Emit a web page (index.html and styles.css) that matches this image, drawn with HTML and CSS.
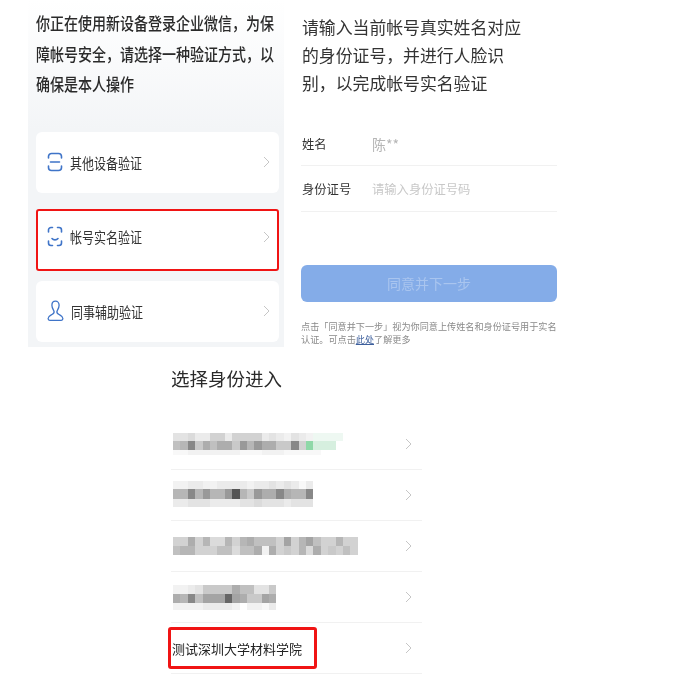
FILE: index.html
```html
<!DOCTYPE html>
<html lang="zh">
<head>
<meta charset="utf-8">
<title>企业微信验证</title>
<link rel="stylesheet" href="styles.css">
</head>
<body>
<div class="top">
  <section class="verify">
    <p class="verify-title"><span>你正在使用新设备登录企业微信，为保</span><span>障帐号安全，请选择一种验证方式，以</span><span>确保是本人操作</span></p>
    <div class="card first">
      <svg class="icon" width="16" height="20" viewBox="0 0 16 20"><path d="M1.500 6V4.500a3 3 0 0 1 3-3h7a3 3 0 0 1 3 3V6M1.500 14v1.500a3 3 0 0 0 3 3h7a3 3 0 0 0 3-3V14M3.500 10h9"/></svg>
      <span class="card-label">其他设备验证</span>
      <svg class="chev" width="7" height="12" viewBox="0 0 7 12"><path d="M1 1l5 5-5 5"/></svg>
    </div>
    <div class="card marked">
      <svg class="icon" width="16" height="21" viewBox="0 0 16 21"><path d="M1.500 6V4a2.500 2.500 0 0 1 2.500-2.500h1.500M10.500 1.500H12A2.500 2.500 0 0 1 14.500 4v2M1.500 15v2A2.500 2.500 0 0 0 4 19.500h1.500M10.500 19.500H12a2.500 2.500 0 0 0 2.500-2.500v-2M5 12.500c1.500 1.800 4.500 1.800 6 0"/></svg>
      <span class="card-label">帐号实名验证</span>
      <svg class="chev" width="7" height="12" viewBox="0 0 7 12"><path d="M1 1l5 5-5 5"/></svg>
    </div>
    <div class="card last">
      <svg class="icon thin" width="17" height="22" viewBox="0 0 17 22"><path d="M8.500 1.200c-2.200 0-3.600 1.800-3.600 4 0 2.600 1.300 4.200 2 5.700.6 1.300-.2 2.500-1.500 3.400-1.500 1-4.300 1.800-4.300 4.300 0 1 .6 1.700 1.600 1.700h11.600c1 0 1.600-.7 1.600-1.700 0-2.500-2.800-3.300-4.300-4.300-1.300-.9-2.100-2.100-1.500-3.400.7-1.500 2-3.100 2-5.700 0-2.200-1.400-4-3.600-4z"/></svg>
      <span class="card-label">同事辅助验证</span>
      <svg class="chev" width="7" height="12" viewBox="0 0 7 12"><path d="M1 1l5 5-5 5"/></svg>
    </div>
  </section>
  <section class="realname">
    <p class="rn-title">请输入当前帐号真实姓名对应<br>的身份证号，并进行人脸识<br>别，以完成帐号实名验证</p>
    <div class="field name-field"><span class="field-label">姓名</span><span class="field-value">陈**</span></div>
    <div class="field"><span class="field-label">身份证号</span><span class="field-hint">请输入身份证号码</span></div>
    <div class="next">同意并下一步</div>
    <p class="note">点击「同意并下一步」视为你同意上传姓名和身份证号用于实名<br>认证。可点击<a class="note-link">此处</a>了解更多</p>
  </section>
</div>
<section class="identity">
  <h1 class="id-title">选择身份进入</h1>
  <div class="id-row"><div class="mosaic" data-m="m1"></div><svg class="chev" width="7" height="12" viewBox="0 0 7 12"><path d="M1 1l5 5-5 5"/></svg></div>
  <div class="id-row"><div class="mosaic" data-m="m2"></div><svg class="chev" width="7" height="12" viewBox="0 0 7 12"><path d="M1 1l5 5-5 5"/></svg></div>
  <div class="id-row"><div class="mosaic" data-m="m3"></div><svg class="chev" width="7" height="12" viewBox="0 0 7 12"><path d="M1 1l5 5-5 5"/></svg></div>
  <div class="id-row"><div class="mosaic" data-m="m4"></div><svg class="chev" width="7" height="12" viewBox="0 0 7 12"><path d="M1 1l5 5-5 5"/></svg></div>
  <div class="id-row picked"><span class="id-name">测试深圳大学材料学院</span><svg class="chev" width="7" height="12" viewBox="0 0 7 12"><path d="M1 1l5 5-5 5"/></svg><span class="red-box"></span></div>
</section>
<script src="mosaic.js"></script>
</body>
</html>
```
FILE: styles.css
```css
* { box-sizing: border-box; }
html, body { margin: 0; padding: 0; background: #fff; }
body {
  width: 677px;
  height: 675px;
  overflow: hidden;
  font-family: "Noto Sans CJK SC", "Noto Sans", sans-serif;
  color: #222;
}
.top { display: flex; height: 347px; margin-left: 28px; filter: blur(0.35px); }
.verify {
  width: 256px;
  height: 347px;
  padding: 8px 5px 0 8px;
  background: linear-gradient(#fff 0, #f3f5f7 130px, #f3f5f7 100%);
  overflow: hidden;
}
.verify-title { margin: 0 0 32px; height: 92px; font-size: 14px; font-weight: 500; color: #2a2a2a; }
.verify-title span { display: block; height: 30.500px; line-height: 30.500px; white-space: nowrap; transform: scaleY(1.25); transform-origin: left center; }
.card { display: flex; align-items: center; height: 61px; background: #fff; border-radius: 6px; padding: 0 9px 1px 11px; }
.card.first { margin-bottom: 16px; }
.card.marked { height: 62px; margin-bottom: 10px; border: 2px solid #f01414; border-radius: 3px; padding: 0 7px 7px 9px; }
.icon { flex: none; fill: none; stroke: #3f74c8; stroke-width: 1.600; stroke-linecap: round; stroke-linejoin: round; }
.icon.thin { stroke-width: 1.300; }
.card .icon { margin-right: 7px; }
.card-label { flex: 1; font-size: 12px; color: #333; display: block; transform: scaleY(1.25); transform-origin: left center; white-space: nowrap; }
.chev { flex: none; fill: none; stroke: #c6c6c6; stroke-width: 1; }
.realname { width: 256px; margin-left: 17px; padding-top: 13px; }
.rn-title { margin: 0 0 26px; font-size: 16.850px; line-height: 28px; color: #333; height: 84px; padding-left: 1px; white-space: nowrap; }
.field { display: flex; align-items: center; height: 46px; border-bottom: 1px solid #f1f1f1; font-size: 12.300px; }
.name-field { height: 43px; }
.field-label { width: 71px; padding-left: 1px; color: #333; }
.field-value { font-size: 14px; color: #b5b5b5; }
.field-hint { color: #c8c8c8; }
.next {
  height: 37px;
  margin-top: 53px;
  background: #84ace8;
  border-radius: 6px;
  text-align: center;
  line-height: 37px;
  font-size: 14px;
  color: rgba(255, 255, 255, 0.3);
}
.note { margin: 18px 0 0; font-size: 9.140px; line-height: 13px; color: #8a8a8a; white-space: nowrap; }
.note-link { color: #3d5f9c; text-decoration: underline; }
.identity { width: 251px; margin-left: 171px; filter: blur(0.35px); }
.id-title { margin: 0; height: 72px; padding-top: 17px; font-size: 18.500px; line-height: 28px; font-weight: 400; color: #2a2a2a; }
.id-row { position: relative; display: flex; align-items: center; justify-content: space-between; height: 51px; padding: 0 10px 0 2px; border-bottom: 1px solid #f1f1f1; }
.id-row.picked { padding-left: 1px; }
.id-name { font-size: 13px; color: #222; }
.red-box { position: absolute; left: -3px; top: 4px; width: 149px; height: 42px; border: 3px solid #f01414; border-radius: 3px; }
.mosaic { display: flex; flex-direction: column; }
.mosaic-row { display: flex; }
.mosaic-cell { display: block; width: 7.400px; flex: none; }
```
FILE: mosaic.js
```js
var GREYS = {
  "0": "#555", "1": "#666", "2": "#777", "3": "#888", "4": "#999", "5": "#a4a4a4",
  "6": "#adadad", "7": "#b6b6b6", "8": "#c0c0c0", "9": "#c9c9c9", "a": "#d2d2d2",
  "b": "#dbdbdb", "c": "#e3e3e3", "d": "#ebebeb", "e": "#f2f2f2", "f": "#f8f8f8",
  "g": "#8fd8a8", "h": "#d6efdf", "i": "#eef8f2", ".": "transparent"
};
var MOSAICS = {
  m1: [["ccbddaadaaaadcdecdeiiii", 8], ["87396866947466993aghhh", 9], ["ffeeeeeeefffeeefffff", 5]],
  m2: [["eeddeeddddeddcdcdfd", 8], ["7737477407946636773", 10], ["ddcccddddccbcccdccc", 8], ["", 2]],
  m3: [["aa6a7bb7a76888a5a758aa7aa", 9], ["877aaa88b886e6a9a7b6a9a8a", 9]],
  m4: [["eedc9999688cc9", 9], ["67385551569956", 9], ["eeeedddde.eefd", 7]]
};
document.querySelectorAll(".mosaic").forEach(function (box) {
  MOSAICS[box.dataset.m].forEach(function (row) {
    var line = document.createElement("div");
    line.className = "mosaic-row";
    line.style.height = row[1] + "px";
    row[0].split("").forEach(function (code) {
      var cell = document.createElement("span");
      cell.className = "mosaic-cell";
      cell.style.background = GREYS[code];
      line.appendChild(cell);
    });
    box.appendChild(line);
  });
});
```
